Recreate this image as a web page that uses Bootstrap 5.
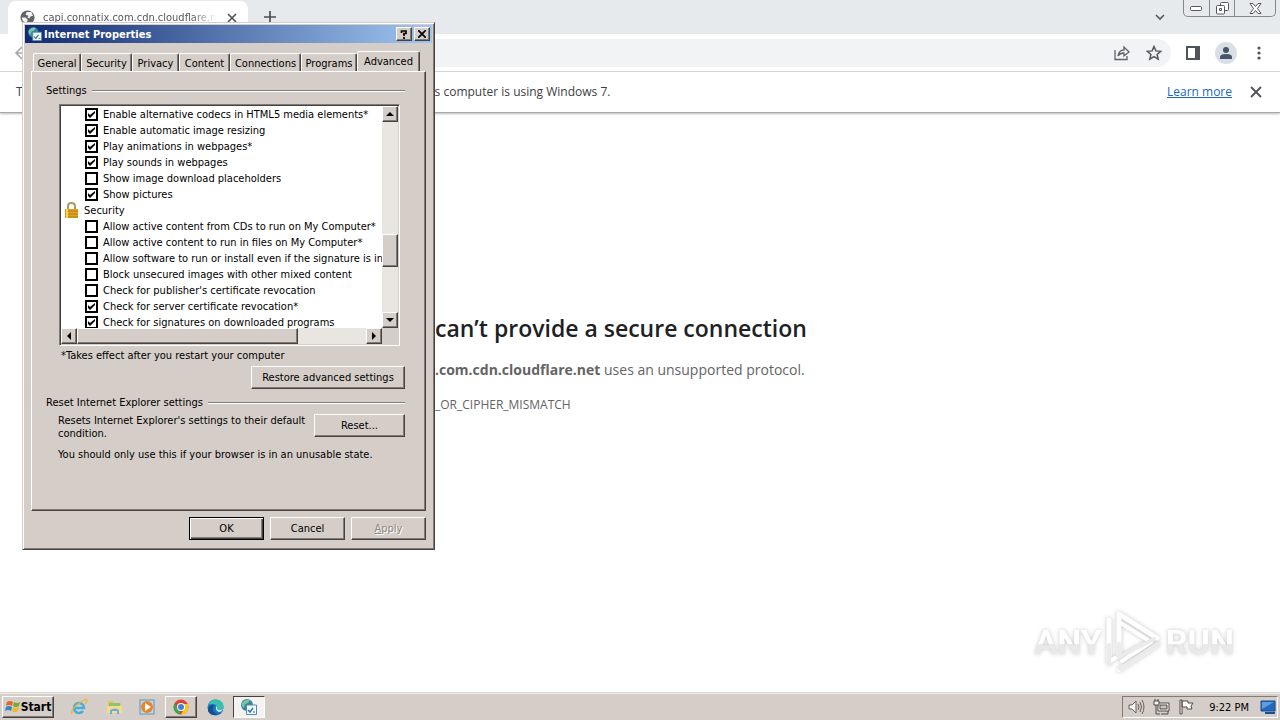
<!DOCTYPE html>
<html lang="en">
<head>
<meta charset="utf-8">
<meta name="viewport" content="width=device-width, initial-scale=1">
<title>capi.connatix.com.cdn.cloudflare.net</title>
<link href="https://cdn.jsdelivr.net/npm/bootstrap@5.3.0/dist/css/bootstrap.min.css" rel="stylesheet">
<style>
:root{--face:#d5cec8;--shade:#807b77;--dark:#46423f;--tahoma:"DejaVu Sans Condensed","DejaVu Sans",sans-serif;--segoe:"Open Sans","Noto Sans",sans-serif}
body{font-family:var(--segoe);color:#3c4043;background:#fff;overflow:hidden}
button{padding:0;border:0;background:none;color:inherit}
svg{display:block;flex:none}
/* browser */
.strip{height:34px;background:#e7eaed;padding-left:8px}
.page-tab{width:240px;height:33px;background:#fff;border-radius:8px 8px 0 0;padding:0 9px 0 12px;font:11px/16px var(--tahoma);color:#55585c}
.tab-title{white-space:nowrap;overflow:hidden;-webkit-mask-image:linear-gradient(90deg,#000 85%,transparent)}
.caption-set{height:17px;border:1px solid #85898c;border-top:0;border-radius:0 0 5px 5px;margin-right:4px}
.caption-set button{width:25px;height:16px;display:flex;align-items:center;justify-content:center}
.caption-set button+button{border-left:1px solid #85898c}
.caption-set button:last-child{width:41px}
.toolbar{height:38px;border-bottom:1px solid #d5d7d9;padding:0 14px 0 14px}
.address{height:28px;background:#f1f3f4;border-radius:0 14px 14px 0;padding-right:9px;gap:16px;margin-left:96px}
.tool-set{gap:15px;padding-left:15px}
.avatar{width:22px;height:22px;border-radius:50%;background:#dadfe6}
.infobar{height:41px;border-bottom:1px solid #a8a8a8;box-shadow:0 1px 2px #bbb;font-size:12px;padding:0 16px}
.infobar a{color:#1a67bd}
.notice-rest{padding-left:412px}
.interstitial{width:100%;max-width:600px;padding:201px 0 0 95px;color:#646464;white-space:nowrap}
.interstitial h1{font-size:23px;line-height:28px;font-weight:600;color:#202124;margin-bottom:16px}
.interstitial p{font-size:14px;line-height:24px;margin-bottom:13px}
.err-code{font-size:12px;line-height:20px}
/* classic window */
.dialog{position:absolute;left:22px;top:22px;width:413px;height:528px;background:var(--face);border:1px solid;border-color:var(--face) var(--dark) var(--dark) var(--face);box-shadow:inset 1px 1px #fff,inset -1px -1px var(--shade);padding:2px;color:#000;font:11px/13px var(--tahoma)}
.titlebar{height:18px;background:linear-gradient(90deg,#102a70,#9fc6f0);color:#fff;font-weight:bold;padding:0 2px 0 3px;gap:2px}
.raised{background:var(--face);border:1px solid;border-color:#fff var(--dark) var(--dark) #fff;box-shadow:inset -1px -1px var(--shade);display:flex;align-items:center;justify-content:center}
.cap{width:16px;height:14px}
.tabs{padding:9px 5px 0 8px;height:28px;position:relative;z-index:1}
.tabs button{height:18px;border:1px solid;border-color:#fff var(--dark) transparent #fff;border-bottom:0;border-radius:2px 2px 0 0;box-shadow:inset -1px 0 var(--shade);white-space:nowrap;padding-top:1px}
.tabs button.current{height:20px;background:var(--face);padding-bottom:1px}
.sheet{margin:0 6px;height:440px;border:1px solid;border-color:#fff var(--dark) var(--dark) #fff;box-shadow:inset -1px -1px var(--shade);padding:12px 20px 0 14px}
.group-title::after{content:"";flex:1;height:2px;border-top:1px solid var(--shade);border-bottom:1px solid #fff;margin-left:5px}
.options{margin:7px 5px 3px 13px;height:242px;border:1px solid;border-color:var(--shade) #fff #fff var(--shade);box-shadow:inset 1px 1px var(--dark);padding:1px;display:grid;grid-template-columns:1fr 16px;grid-template-rows:1fr 16px;background:var(--face)}
.rows{background:#fff;overflow:hidden;margin:0;min-width:0;min-height:0;list-style:none;padding:0}
.rows li{height:16px;display:flex;align-items:center;white-space:nowrap;padding-left:24px;gap:5px}
.rows li.head{padding-left:3px}
.rows input{appearance:none;margin:0;width:13px;height:13px;flex:none;border:2px solid #000;background:#fff}
.rows input:checked{background:#fff url("data:image/svg+xml,%3Csvg xmlns='http://www.w3.org/2000/svg' viewBox='0 0 9 9'%3E%3Cpath d='M1 3v3l2 2 5-5V1L3 5z'/%3E%3C/svg%3E")}
.track{background:#e9e6e2;display:flex}
.track .raised{flex:none;width:16px;height:16px}
.vbar{flex-direction:column}
.vbar .thumb{height:33px;margin:112px 0 auto}
.hbar .thumb{width:221px;margin-right:auto}
.push{height:23px}
.action{width:75px}
.default-push{border-color:#000;box-shadow:inset 1px 1px #fff,inset -1px -1px var(--dark),inset -2px -2px var(--shade)}
.push:disabled{color:#8c8782;text-shadow:1px 1px #fff}
/* taskbar */
.taskbar{height:27px;background:var(--face);border-top:1px solid #efece9;box-shadow:0 -1px #d8d5d2;color:#000;padding:2px;font:11px/13px var(--tahoma)}
.start-btn{width:52px;height:22px;font-weight:bold;font-size:12px}
.quick{width:32px;height:22px;display:flex;align-items:center;justify-content:center}
.pressed{background:#f5f3f1;border-color:var(--dark) #fff #fff var(--dark);box-shadow:none}
.tray{height:22px;width:156px;border:1px solid;border-color:var(--shade) #fff #fff var(--shade);padding:0 1px 0 5px;gap:8px}
.brand{position:absolute;right:46px;bottom:46px;gap:4px;filter:drop-shadow(0 0 2px #bbb);opacity:.85}
.brand span{font:bold 34px/50px Roboto,sans-serif;background:linear-gradient(#fff 55%,#e6e6e6 55%);background-clip:text;-webkit-background-clip:text;color:transparent}
</style>
</head>
<body class="vh-100 d-flex flex-column position-relative">
<svg class="d-none"><defs>
<symbol id="settings-icon" viewBox="0 0 16 16"><circle cx="6" cy="6" r="6" fill="#3983a8"/><path d="M1 4q4-5 8-3L7 4 4 5 3 9Q0 7 1 4z" fill="#78c89a"/><path d="M5.500 6h10v9.500h-10z" fill="#f3fbff" stroke="#568aaa"/><path d="m7 11 2 2 3-4" stroke="#287caa" stroke-width="1.500" fill="none"/><path d="M12 13h2" stroke="#555"/></symbol>
</defs></svg>

<header>
  <div class="strip d-flex">
    <div class="page-tab d-flex align-items-center mt-auto">
      <svg width="15" height="15" viewBox="0 0 16 16"><circle cx="8" cy="8" r="7.500" fill="#606468"/><path d="M2 8h4l2 2v2l-2 2Q2 12 2 8zM7 2h5l2 4-3 1-1 2-2-1 1-2-3-1z" fill="#f3f3f3"/></svg>
      <span class="tab-title flex-fill ms-2 me-2">capi.connatix.com.cdn.cloudflare.net</span>
      <button aria-label="Close tab"><svg width="14" height="14" viewBox="0 0 14 14"><path d="m3 3 8 8m0-8-8 8" stroke="#4b4e52" stroke-width="1.600"/></svg></button>
    </div>
    <button class="ms-3 d-flex align-items-center" aria-label="New tab"><svg width="12" height="12" viewBox="0 0 12 12"><path d="M6 0v12M0 6h12" stroke="#4b4e52" stroke-width="1.700"/></svg></button>
    <button class="ms-auto me-3" aria-label="Search tabs"><svg width="14" height="14" viewBox="0 0 14 14"><path d="m3 5 4 4 4-4" fill="none" stroke="#55595d" stroke-width="1.600"/></svg></button>
    <div class="caption-set d-flex">
      <button aria-label="Minimize"><svg width="13" height="6" viewBox="0 0 13 6"><rect x=".5" y="1.500" width="11" height="4" rx="1" fill="#fff" stroke="#55585b"/></svg></button>
      <button aria-label="Restore"><svg width="13" height="13" viewBox="0 0 13 13" fill="#fff" stroke="#55585b"><rect x="4.500" y=".5" width="8" height="8" rx="1"/><rect x=".5" y="3.500" width="8" height="8.500" rx="1"/><path d="M3.500 6.500h2v2h-2z"/></svg></button>
      <button aria-label="Close"><svg width="13" height="11" viewBox="0 0 13 11"><path d="M1 .5h3l2.500 3L9 .5h3l-3.500 5 3.500 5H9l-2.500-3-2.500 3H1l3.500-5z" fill="#fff" stroke="#55585b"/></svg></button>
    </div>
  </div>
  <div class="toolbar d-flex align-items-center">
    <button aria-label="Back"><svg width="14" height="14" viewBox="0 0 14 14"><path d="M14 7H2m6-6L2 7l6 6" fill="none" stroke="#a6a8aa" stroke-width="1.600"/></svg></button>
    <div class="address flex-fill d-flex align-items-center justify-content-end">
      <button aria-label="Share"><svg width="16" height="16" viewBox="0 0 16 16" fill="none" stroke="#5f6368" stroke-width="1.300"><path d="M1 5v9.500h12V11"/><path d="M4 11q1-6 6-6V2l5 5-5 4V8Q6 8 4 11z"/></svg></button>
      <button aria-label="Bookmark"><svg width="16" height="16" viewBox="0 0 16 16"><path d="m8 1.500 1.900 4.400 4.800.4-3.600 3.200 1.100 4.700L8 11.700l-4.200 2.500 1.100-4.700L1.300 6.300l4.800-.4z" fill="none" stroke="#54585c" stroke-width="1.500"/></svg></button>
    </div>
    <div class="tool-set d-flex align-items-center">
      <button aria-label="Side panel"><svg width="14" height="14" viewBox="0 0 14 14"><path d="M1 1h12v12H1z" fill="none" stroke="#505357" stroke-width="2"/><path d="M9 1h4v12H9z" fill="#505357"/></svg></button>
      <button class="avatar d-flex align-items-center justify-content-center" aria-label="Profile"><svg width="12" height="12" viewBox="0 0 12 12" fill="#47546c"><circle cx="6" cy="3" r="3"/><path d="M0 12V10q0-3 6-3t6 3v2z"/></svg></button>
      <button aria-label="Menu"><svg width="14" height="14" viewBox="0 0 14 14" fill="#505357"><circle cx="7" cy="2" r="1.600"/><circle cx="7" cy="7" r="1.600"/><circle cx="7" cy="12" r="1.600"/></svg></button>
    </div>
  </div>
  <div class="infobar d-flex align-items-center">
    <span>T</span><span class="notice-rest">s computer is using Windows 7.</span>
    <a class="ms-auto me-3" href="#">Learn more</a>
    <button aria-label="Dismiss"><svg width="16" height="16" viewBox="0 0 16 16"><path d="m3 3 10 10m0-10L3 13" stroke="#505357" stroke-width="1.800"/></svg></button>
  </div>
</header>

<main class="flex-fill">
  <div class="interstitial mx-auto">
    <h1>can’t provide a secure connection</h1>
    <p><strong>.com.cdn.cloudflare.net</strong> uses an unsupported protocol.</p>
    <div class="err-code">_OR_CIPHER_MISMATCH</div>
  </div>
</main>

<footer class="taskbar d-flex align-items-center">
  <button class="raised start-btn"><svg width="16" height="16" viewBox="0 0 16 16"><path d="M2 3q3-2 6 0L7 7Q4 5 1 7z" fill="#e8632b"/><path d="M9 3q3 2 6 0l-1 4q-3 2-6 0z" fill="#73a936"/><path d="M1 8q3-2 6 0l-1 4q-3-2-6 0z" fill="#2d86cb"/><path d="M8 8q3 2 6 0l-1 4q-3 2-6 0z" fill="#f2b91d"/></svg>Start</button>
  <div class="d-flex" style="margin-left:9px">
    <button class="quick" aria-label="Internet Explorer"><svg width="18" height="18" viewBox="0 0 18 18"><path d="M4.500 10H14A5 5 0 1 0 13 13" fill="none" stroke="#45aee0" stroke-width="2.600"/><path d="M2 16Q0 12 8 6t9-4q0 2-2 4" fill="none" stroke="#e7b93b" stroke-width="1.300"/></svg></button>
    <button class="quick ms-1" aria-label="Explorer"><svg width="18" height="18" viewBox="0 0 18 18"><path d="M2 3h5l1 2h7v10H2z" fill="#e7c360"/><path d="M3 5h11v4H3z" fill="#8dc56f"/><path d="M1 8h15v7H1z" fill="#f4dc8b"/><path d="M4 16v-4q5-3 9 0v4h-2v-3H6v3z" fill="#68aede"/></svg></button>
    <button class="quick" aria-label="Media Player"><svg width="17" height="17" viewBox="0 0 17 17"><rect x="1" y="1" width="14" height="14" fill="#b6dcf1" stroke="#5c93bd"/><circle cx="8" cy="8" r="6" fill="#ed8422"/><path d="m6 4 6 4-6 4z" fill="#fff"/></svg></button>
    <button class="raised quick" style="margin-left:2px" aria-label="Chrome"><svg width="16" height="16" viewBox="0 0 16 16"><circle cx="8" cy="8" r="7.500" fill="#df4336"/><path d="m1.500 4.500 4 6L8 15.500A7.500 7.500 0 0 1 1.500 4.500z" fill="#35a852"/><path d="M8 15.500 11 10V5h4a7.500 7.500 0 0 1-7 10.500z" fill="#f9c61a"/><circle cx="8" cy="8" r="4" fill="#fff"/><circle cx="8" cy="8" r="3" fill="#3f80df"/></svg></button>
    <button class="quick mx-1" style="width:28px" aria-label="Edge"><svg width="17" height="17" viewBox="0 0 17 17"><circle cx="8.500" cy="8.500" r="8" fill="#1975bd"/><path d="M1 7Q3 0 9 .5q7 1 7.500 6 0 5-5 4.500l-2-1Q11 5 5 5 2 5 1 7z" fill="#38bfae"/><path d="M6 9q-1 5 5 6-7 3-10-3Q1 5 7 6z" fill="#174f8c"/><path d="M9 7q2 1 1 3 2 2 6 0-1 3-4 3-4-1-3-6z" fill="#c5e4ee"/></svg></button>
    <button class="raised pressed quick" aria-label="Internet Properties task"><svg width="16" height="16"><use href="#settings-icon"/></svg></button>
  </div>
  <div class="tray d-flex align-items-center ms-auto">
    <svg width="17" height="16" viewBox="0 0 17 16" fill="none" stroke="#65615e"><path d="M1 6h3l4-4v12l-4-4H1z" fill="#f8f6f4"/><path d="M10 5q2 3 0 6m2-8q3 5 0 10m2-12q4 7 0 14"/></svg>
    <svg width="17" height="16" viewBox="0 0 17 16" fill="#f8f6f4" stroke="#4e4b48"><path d="M5 4h11v8H5z"/><path d="M7 6h7v4H7z" fill="#c8c4bf"/><path d="M1 2h5v4H1zM2 0v2m3-2v2" /><path d="M3 6v9h4m1 0h7v-3" fill="none"/></svg>
    <svg width="17" height="16" viewBox="0 0 17 16" fill="#fffdfb" stroke="#4e4b48"><path d="M2 15V1h2v14zM4 2h6v2h5l-2 3 1 3H9V8H4z"/></svg>
    <span class="ms-auto text-nowrap">9:22 PM</span>
    <svg style="margin-left:3px" width="16" height="16" viewBox="0 0 16 16"><path d="M1 2h14v10H1z" fill="#2768bf" stroke="#174b89"/><path d="M2 3h12L2 10z" fill="#5e9be0"/><path d="M5 13h10v2H5z" fill="#1b4e94"/></svg>
  </div>
</footer>

<div class="brand d-flex align-items-center" aria-label="ANY RUN">
  <span>ANY</span>
  <svg width="56" height="64" viewBox="0 0 56 64" fill="none" stroke-linecap="round" stroke-linejoin="round"><path d="M3 51V10M13 46V4l38 24" stroke="#fff" stroke-width="5"/><path d="m13 12 32 20-29 19m-3 9 38-25M3 52l6-4" stroke="#fff" stroke-width="4"/><path d="M3 35v19m10-20v13l35-18M14 59l38-25" stroke="#e8e8e8" stroke-width="4"/></svg>
  <span>RUN</span>
</div>

<section class="dialog" role="dialog" aria-labelledby="dlg-title">
  <div class="titlebar d-flex align-items-center">
    <svg width="14" height="14"><use href="#settings-icon"/></svg>
    <span id="dlg-title">Internet Properties</span>
    <button class="raised cap ms-auto" aria-label="Help"><svg width="8" height="9" viewBox="0 0 8 9"><path d="M1.500 3V1h4.500v2.500H4V6M4 7v2" fill="none" stroke="#000" stroke-width="1.700"/></svg></button>
    <button class="raised cap" aria-label="Close dialog"><svg width="8" height="8" viewBox="0 0 8 8"><path d="m0 0 8 8m0-8L0 8" stroke="#000" stroke-width="1.700"/></svg></button>
  </div>
  <div class="tabs d-flex align-items-end">
    <button style="width:48px">General</button><button style="width:51px">Security</button><button style="width:47px">Privacy</button><button style="width:51px">Content</button><button style="width:71px">Connections</button><button style="width:56px">Programs</button><button class="current" style="width:63px">Advanced</button>
  </div>
  <div class="sheet">
    <div class="group-title d-flex align-items-center">Settings</div>
    <div class="options">
      <ul class="rows">
        <li><input type="checkbox" id="o1" checked><label for="o1">Enable alternative codecs in HTML5 media elements*</label></li>
        <li><input type="checkbox" id="o2" checked><label for="o2">Enable automatic image resizing</label></li>
        <li><input type="checkbox" id="o3" checked><label for="o3">Play animations in webpages*</label></li>
        <li><input type="checkbox" id="o4" checked><label for="o4">Play sounds in webpages</label></li>
        <li><input type="checkbox" id="o5"><label for="o5">Show image download placeholders</label></li>
        <li><input type="checkbox" id="o6" checked><label for="o6">Show pictures</label></li>
        <li class="head"><svg width="15" height="16" viewBox="0 0 15 16"><path d="M4 8V4q0-3 3.500-3T11 4v4" fill="none" stroke="#b09a62" stroke-width="2"/><path d="M1 7h13v9H1z" fill="#e0a51f"/><path d="M1 9h13M1 12h13M1 15h13" stroke="#b77b12"/><path d="M3 7v9" stroke="#f7d768" stroke-width="2"/></svg>Security</li>
        <li><input type="checkbox" id="o7"><label for="o7">Allow active content from CDs to run on My Computer*</label></li>
        <li><input type="checkbox" id="o8"><label for="o8">Allow active content to run in files on My Computer*</label></li>
        <li><input type="checkbox" id="o9"><label for="o9">Allow software to run or install even if the signature is invalid</label></li>
        <li><input type="checkbox" id="o10"><label for="o10">Block unsecured images with other mixed content</label></li>
        <li><input type="checkbox" id="o11"><label for="o11">Check for publisher's certificate revocation</label></li>
        <li><input type="checkbox" id="o12" checked><label for="o12">Check for server certificate revocation*</label></li>
        <li><input type="checkbox" id="o13" checked><label for="o13">Check for signatures on downloaded programs</label></li>
      </ul>
      <div class="track vbar">
        <button class="raised" aria-label="Scroll up"><svg width="8" height="4" viewBox="0 0 8 4"><path d="m0 4 4-4 4 4z"/></svg></button>
        <div class="raised thumb"></div>
        <button class="raised" aria-label="Scroll down"><svg width="8" height="4" viewBox="0 0 8 4"><path d="m0 0 4 4 4-4z"/></svg></button>
      </div>
      <div class="track hbar">
        <button class="raised" aria-label="Scroll left"><svg width="4" height="8" viewBox="0 0 4 8"><path d="M4 0 0 4l4 4z"/></svg></button>
        <div class="raised thumb"></div>
        <button class="raised" aria-label="Scroll right"><svg width="4" height="8" viewBox="0 0 4 8"><path d="m0 0 4 4-4 4z"/></svg></button>
      </div>
    </div>
    <div style="margin-left:15px">*Takes effect after you restart your computer</div>
    <button class="raised push ms-auto mt-1" style="width:154px">Restore advanced settings</button>
    <div class="group-title d-flex align-items-center" style="margin-top:7px">Reset Internet Explorer settings</div>
    <div class="d-flex justify-content-between ps-2" style="margin-top:5px">
      <div class="ms-1 text-nowrap">Resets Internet Explorer's settings to their default<br>condition.</div>
      <button class="raised push" style="width:91px">Reset...</button>
    </div>
    <div class="mt-2 ps-2 ms-1">You should only use this if your browser is in an unusable state.</div>
  </div>
  <div class="d-flex justify-content-end" style="gap:6px;padding:6px 6px 0">
    <button class="raised push action default-push">OK</button>
    <button class="raised push action">Cancel</button>
    <button class="raised push action" disabled><u>A</u>pply</button>
  </div>
</section>
<script src="https://cdn.jsdelivr.net/npm/bootstrap@5.3.0/dist/js/bootstrap.bundle.min.js"></script>
</body>
</html>
